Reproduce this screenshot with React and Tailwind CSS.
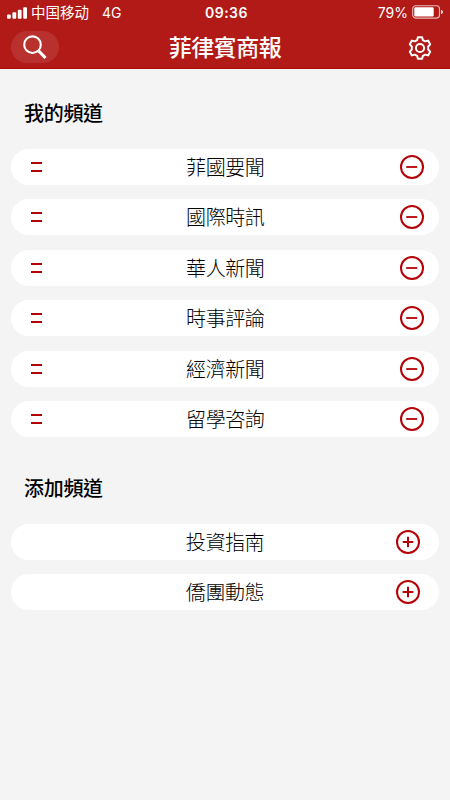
import React, { useState } from "react";

const STROKE = "#b50005";

const initialMine = ["菲國要聞", "國際時訊", "華人新聞", "時事評論", "經濟新聞", "留學咨詢"];
const initialMore = ["投資指南", "僑團動態"];

function StatusBar() {
  return (
    <div className="grid grid-cols-3 items-center h-[25px] pl-[7px] pr-[6px] text-[14px] leading-[25px]">
      <div className="flex items-center whitespace-nowrap">
        <svg width="21" height="12" viewBox="0 0 21 12" fill="#fff">
          <rect x="0" y="7.5" width="3.8" height="4.2" rx="1" />
          <rect x="5.4" y="5.2" width="3.8" height="6.5" rx="1" />
          <rect x="10.8" y="2.8" width="3.8" height="8.9" rx="1" />
          <rect x="16.2" y="0.2" width="3.8" height="11.5" rx="1" />
        </svg>
        <span className="ml-[3px] text-[14.5px]">中国移动</span>
        <span className="ml-[13px]">4G</span>
      </div>
      <div className="text-center font-semibold tracking-[0.5px] pl-[2px]">09:36</div>
      <div className="flex items-center justify-end">
        <span className="mr-[4px]">79%</span>
        <svg className="-mt-[1px]" width="32" height="14" viewBox="0 0 32 14" fill="none">
          <rect x="0.7" y="0.7" width="26.8" height="12.4" rx="3" stroke="#fff" strokeOpacity="0.7" strokeWidth="1.1" />
          <rect x="2.3" y="2.3" width="19.4" height="9.2" rx="1.2" fill="#fff" />
          <path d="M29 4.8c1.5.5 2 1.2 2 2.2s-.5 1.7-2 2.2z" fill="#fff" fillOpacity="0.8" />
        </svg>
      </div>
    </div>
  );
}

function SearchIcon() {
  return (
    <svg width="24" height="25" viewBox="0 0 24 25" fill="none" stroke="#fff">
      <circle cx="9.5" cy="9.7" r="8.3" strokeWidth="2.1" />
      <path d="M15.3 15.5L22.5 23" strokeWidth="3.2" />
    </svg>
  );
}

function GearIcon() {
  return (
    <svg width="24" height="24" viewBox="0 0 24 24" fill="none" stroke="#fff" strokeWidth="2" strokeLinejoin="round">
      <path d="M9.9 1.3h4.2l.8 2.900 2.200 1.200 3-.8 2.100 3.700-2 2.200v3l2 2.200-2.100 3.700-3-.8-2.200 1.200-.8 2.900H9.900l-.8-2.900-2.200-1.200-3 .8-2.100-3.700 2-2.200v-3l-2-2.200 2.100-3.700 3 .8 2.200-1.200z" />
      <circle cx="12" cy="12" r="4.1" />
    </svg>
  );
}

function RoundIcon({ plus }) {
  return (
    <svg width="24" height="24" viewBox="0 0 24 24" fill="none" stroke={STROKE}>
      <circle cx="12" cy="12" r="11" strokeWidth="2" />
      <path d={plus ? "M6.7 12h10.6M12 6.7v10.6" : "M6.2 12h11"} strokeWidth={plus ? 2 : 1.8} />
    </svg>
  );
}

function ChannelRow({ name, added, onToggle }) {
  return (
    <li
      className={`grid grid-cols-[80px_1fr_80px] items-center h-[36px] rounded-full bg-white pl-[20px] ${
        added ? "pr-[15.5px]" : "pr-[19px]"
      }`}
    >
      <div>
        {added && (
          <svg width="11" height="12" viewBox="0 0 11 12" stroke={STROKE} strokeWidth="1.8">
            <path d="M0 2h11M0 10h11" />
          </svg>
        )}
      </div>
      <span
        className={`pt-[2px] text-center text-[20px] leading-[34px] tracking-[-0.4px] font-light text-black ${
          added ? "-ml-[4px]" : "-ml-[1px]"
        }`}
      >
        {name}
      </span>
      <button className="justify-self-end" onClick={onToggle}>
        <RoundIcon plus={!added} />
      </button>
    </li>
  );
}

function App() {
  const [mine, setMine] = useState(initialMine);
  const [more, setMore] = useState(initialMore);

  const removeChannel = (name) => {
    setMine(mine.filter((c) => c !== name));
    setMore([...more, name]);
  };

  const addChannel = (name) => {
    setMore(more.filter((c) => c !== name));
    setMine([...mine, name]);
  };

  return (
    <div className="min-h-screen bg-[#f4f4f4] font-['Inter','Noto_Sans_CJK_TC',sans-serif]">
      {/* Header */}
      <header className="h-[69px] bg-[#b11a16] border-b border-[#b00b0c] text-white">
        <StatusBar />
        <div className="grid grid-cols-[60px_1fr_60px] items-center h-[44px] px-[11px]">
          <button className="flex items-center justify-center w-[48px] h-[32px] rounded-full bg-[#b9312e]">
            <SearchIcon />
          </button>
          <h1 className="pt-[2px] text-center text-[23px] leading-[42px] tracking-[-0.5px] font-medium">菲律賓商報</h1>
          <button className="justify-self-end mr-[7px] pt-[1px]">
            <GearIcon />
          </button>
        </div>
      </header>

      {/* Channels */}
      <main className="px-[11px]">
        <h2 className="pt-[30px] pl-[13px] text-[20px] leading-[30px] tracking-[-0.3px] font-medium text-black">
          我的頻道
        </h2>
        <ul className="mt-[20px] flex flex-col gap-[14.4px]">
          {mine.map((name) => (
            <ChannelRow key={name} name={name} added onToggle={() => removeChannel(name)} />
          ))}
        </ul>

        <h2 className="pt-[37px] pl-[13px] text-[20px] leading-[30px] tracking-[-0.3px] font-medium text-black">
          添加頻道
        </h2>
        <ul className="mt-[20px] flex flex-col gap-[14px]">
          {more.map((name) => (
            <ChannelRow key={name} name={name} added={false} onToggle={() => addChannel(name)} />
          ))}
        </ul>
      </main>
    </div>
  );
}

export default App;
